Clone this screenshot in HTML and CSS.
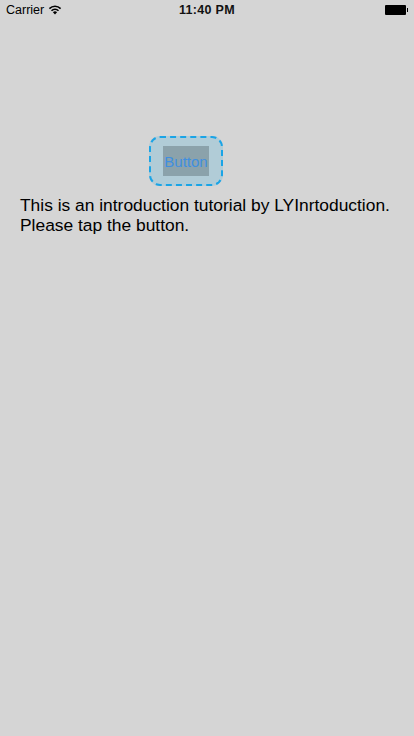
FILE: index.html
```html
<!DOCTYPE html>
<html>
<head>
<meta charset="utf-8">
<link rel="stylesheet" href="styles.css">
</head>
<body>
<div class="screen">
  <div class="status">
    <div class="status-left">
      <span class="carrier">Carrier</span>
      <svg class="wifi" width="14" height="10" viewBox="0 0 14 10">
        <path d="M7 9.5 L4.9 7.2 A3 3 0 0 1 9.1 7.2 Z" fill="#000"/>
        <path d="M3.5 5.8 A5 5 0 0 1 10.5 5.8" stroke="#000" stroke-width="1.6" fill="none"/>
        <path d="M1.4 3.6 A8 8 0 0 1 12.6 3.6" stroke="#000" stroke-width="1.6" fill="none"/>
      </svg>
    </div>
    <div class="time">11:40 PM</div>
    <div class="status-right">
      <div class="battery"></div>
      <div class="battery-nub"></div>
    </div>
  </div>
  <div class="content">
    <div class="highlight">
      <div class="btn">Button</div>
    </div>
    <p class="intro">This is an introduction tutorial by LYInrtoduction. Please tap the button.</p>
  </div>
</div>
</body>
</html>
```
FILE: styles.css
```css
html, body {
  margin: 0;
  padding: 0;
}
body {
  background: #d5d5d5;
  font-family: "Liberation Sans", Arial, sans-serif;
  color: #000;
}
.screen {
  width: 414px;
  height: 736px;
  background: #d5d5d5;
  overflow: hidden;
}
.status {
  height: 20px;
  display: flex;
  align-items: center;
  justify-content: space-between;
  padding: 0 6px;
}
.status-left {
  display: flex;
  align-items: center;
  gap: 4px;
  font-size: 12.5px;
  width: 120px;
}
.wifi {
  margin-top: -1px;
}
.time {
  font-size: 12.5px;
  font-weight: bold;
  letter-spacing: 0.3px;
  color: #111;
}
.status-right {
  width: 120px;
  display: flex;
  justify-content: flex-end;
  align-items: center;
}
.battery {
  width: 21px;
  height: 10px;
  background: #000;
  border-radius: 1px;
}
.battery-nub {
  width: 1.5px;
  height: 4px;
  background: #000;
  margin-left: 1px;
}
.content {
  padding-top: 116px;
}
.highlight {
  margin-left: 149px;
  width: 74px;
  height: 50px;
  box-sizing: border-box;
  border: 2px dashed #1aa4e6;
  border-radius: 11px;
  background: #b1ccd7;
  display: flex;
  align-items: center;
  justify-content: center;
}
.btn {
  width: 46px;
  height: 30px;
  background: #8ba2ab;
  color: #3f8fe0;
  font-size: 15px;
  display: flex;
  align-items: center;
  justify-content: center;
}
.intro {
  margin: 9px 0 0 20px;
  width: 390px;
  font-size: 17.4px;
  line-height: 20px;
}
```
